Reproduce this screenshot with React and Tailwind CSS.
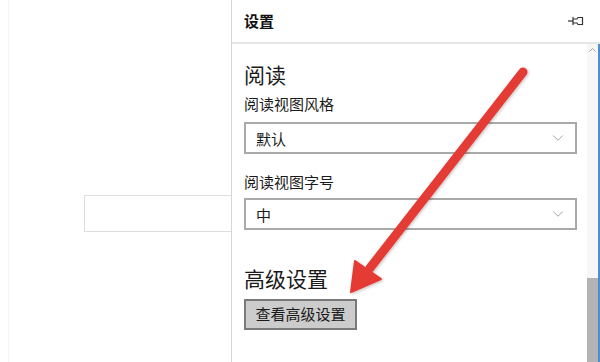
import { ChevronDown } from 'lucide-react';

const cjk = { fontFamily: '"Noto Sans CJK SC", "Noto Sans", sans-serif' };

function Select({ value }) {
  return (
    <div className="flex h-[32px] w-[333px] items-center justify-between border-2 border-[#a9a9a9] bg-white pl-[10px] pr-[8px]">
      <span className="text-[15px] leading-none text-[#1a1a1a]">{value}</span>
      <ChevronDown size={18} strokeWidth={1.2} className="text-[#9a9a9a]" />
    </div>
  );
}

export default function App() {
  return (
    <div className="relative flex h-[362px] w-[600px] overflow-hidden bg-white" style={cjk}>
      {/* page behind the panel */}
      <div className="ml-[8px] flex flex-1 border-l border-[#f4f6f4] pl-[75px] pt-[195px]">
        <div className="h-[37px] flex-1 border border-r-0 border-[#dedede] bg-white"></div>
      </div>

      {/* settings panel */}
      <div className="flex w-[369px] flex-col border-l border-[#d6d6d6] bg-white">
        <div className="flex h-[44px] items-center justify-between border-b-2 border-[#e6e6e6] pl-[12px] pr-[16px]">
          <span className="text-[15px] font-bold text-[#111]">设置</span>
          <svg width="16" height="10" viewBox="0 0 16 10" fill="none" stroke="#333" strokeWidth="1.2">
            <path d="M0 5h5" />
            <path d="M5 1v8" />
            <path d="M5 3h4l1-1.5h4.5v7H10L9 7H5" />
          </svg>
        </div>

        <div className="flex flex-1">
          <div className="flex flex-1 flex-col pl-[12px]">
            <div className="mt-[16px] text-[21px] leading-[28px] text-[#1a1a1a]">阅读</div>
            <div className="mt-[6px] text-[15px] leading-[20px] text-[#1a1a1a]">阅读视图风格</div>
            <div className="mt-[8px]">
              <Select value="默认" />
            </div>
            <div className="mt-[18px] text-[15px] leading-[20px] text-[#1a1a1a]">阅读视图字号</div>
            <div className="mt-[6px]">
              <Select value="中" />
            </div>
            <div className="mt-[34px] text-[21px] leading-[28px] text-[#1a1a1a]">高级设置</div>
            <div className="mt-[7px]">
              <button className="flex h-[31px] w-[113px] items-center justify-center border-2 border-[#7a7a7a] bg-[#cccccc] text-[15px] text-[#1a1a1a]">
                查看高级设置
              </button>
            </div>
          </div>

          <div className="flex w-[11px] flex-col bg-[#f7f7f7]">
            <div className="flex h-[12px] items-center justify-center">
              <svg width="7" height="4" viewBox="0 0 7 4" fill="none" stroke="#a0a0a0" strokeWidth="1">
                <path d="M0.5 3.5L3.5 0.5L6.5 3.5" />
              </svg>
            </div>
            <div className="flex-1"></div>
            <div className="h-[84px] bg-[#b3b3b3]"></div>
          </div>
          <div className="w-[2px] bg-[#4d8fcf]"></div>
        </div>
      </div>

      {/* red annotation arrow */}
      <svg className="pointer-events-none absolute left-0 top-0" width="600" height="362" viewBox="0 0 600 362">
        <defs>
          <filter id="sh" x="-20%" y="-20%" width="140%" height="140%">
            <feDropShadow dx="1" dy="1" stdDeviation="1.5" floodColor="#000" floodOpacity="0.25" />
          </filter>
        </defs>
        <g filter="url(#sh)" fill="#e53a35" stroke="#e53a35">
          <line x1="523" y1="72" x2="370" y2="268" strokeWidth="9" strokeLinecap="round" />
          <polygon points="351,292 355,261 381,279" strokeWidth="2" strokeLinejoin="round" />
        </g>
      </svg>
    </div>
  );
}
